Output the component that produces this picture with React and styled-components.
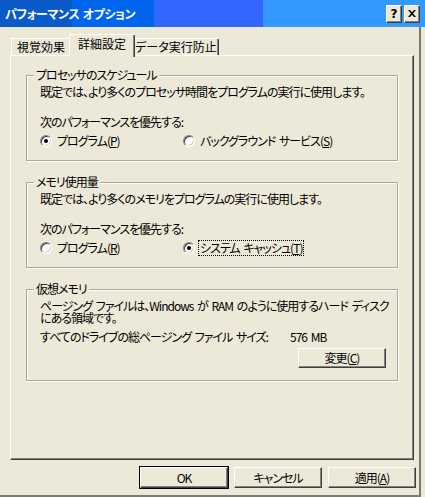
import React from 'react';
import styled, { createGlobalStyle } from 'styled-components';

const GlobalStyle = createGlobalStyle`
    html, body {
        margin: 0;
        padding: 0;
        background: #ece9d8;
    }
    body {
        font-family: "Noto Sans CJK JP", "Noto Sans", sans-serif;
        font-size: 12px;
        letter-spacing: -1px;
        word-spacing: 2px;
        color: #000;
    }
`;

const Window = styled.div`
    width: 425px;
    height: 497px;
    background: #ece9d8;
    display: flex;
    flex-direction: column;
    overflow: hidden;
`;

const TitleBar = styled.div`
    height: 27px;
    flex: none;
    display: flex;
    align-items: center;
    padding: 0 5px;
    background: linear-gradient(to right,
        #0a5ac8 0, #0a5ac8 72px,
        #0066ee 72px, #0066ee 154px,
        #3366ff 154px, #3366ff 263px,
        #3399ff 263px);
`;

const Title = styled.div`
    flex: 1;
    color: #fff;
    font-weight: bold;
    font-size: 12px;
    letter-spacing: -0.4px;
    word-spacing: 1px;
    font-feature-settings: "palt";
    white-space: nowrap;
`;

const CaptionButtons = styled.div`
    display: flex;
    gap: 2px;
`;

const CaptionButton = styled.div`
    width: 16px;
    height: 18px;
    box-sizing: border-box;
    background: #ece9d8;
    border-top: 1px solid #fff;
    border-left: 1px solid #fff;
    border-right: 1px solid #404040;
    border-bottom: 1px solid #404040;
    box-shadow: inset -1px -1px 0 #808080;
    display: flex;
    align-items: center;
    justify-content: center;
    font-family: "DejaVu Sans", sans-serif;
    font-weight: bold;
    font-size: 12px;
    letter-spacing: 0;
    line-height: 1;
`;

const Body = styled.div`
    width: 421px;
    height: 470px;
    box-sizing: border-box;
    border-right: 2px solid #7b7b76;
    border-bottom: 2px solid #7b7b76;
    padding: 7px 3px 0 10px;
    display: flex;
    flex-direction: column;
`;

const TabRow = styled.div`
    display: flex;
    align-items: flex-end;
    height: 21px;
    padding-left: 1px;
    position: relative;
    z-index: 1;
`;

const Tab = styled.div`
    width: ${p => (p.$active ? p.$w + 4 : p.$w)}px;
    height: ${p => (p.$active ? 23 : 17)}px;
    margin: 0 ${p => (p.$active ? -2 : 0)}px ${p => (p.$active ? -2 : 0)}px;
    box-sizing: border-box;
    background: #ece9d8;
    border-top: 1px solid #fff;
    border-left: 1px solid #fff;
    border-right: 1px solid #404040;
    border-radius: 2px 2px 0 0;
    box-shadow: inset -1px 0 0 #808080;
    display: flex;
    justify-content: center;
    padding-top: ${p => (p.$active ? 2 : 1)}px;
    line-height: 14px;
    letter-spacing: 0;
    white-space: nowrap;
    font-feature-settings: "palt";
    z-index: ${p => (p.$active ? 2 : 1)};
`;

const Panel = styled.div`
    width: 404px;
    height: 405px;
    box-sizing: border-box;
    border-top: 1px solid #fff;
    border-left: 1px solid #fff;
    border-right: 1px solid #404040;
    border-bottom: 1px solid #404040;
    box-shadow: inset -1px -1px 0 #808080;
    padding: 19px 15px 0 15px;
    display: flex;
    flex-direction: column;
    gap: 21px;
`;

const Group = styled.div`
    position: relative;
    border: 1px solid #aca899;
    box-shadow: inset 1px 1px 0 #fff, 1px 1px 0 #fff;
    padding: 9px 0 12px 13px;
`;

const Legend = styled.span`
    position: absolute;
    left: 7px;
    top: -8px;
    padding: 0 2px;
    background: #ece9d8;
    line-height: 14px;
    white-space: nowrap;
    font-feature-settings: "palt";
`;

const Line = styled.div`
    line-height: 14px;
    height: 14px;
    margin-top: ${p => p.$mt || 0}px;
    white-space: nowrap;
    font-feature-settings: "palt";
`;

const Paragraph = styled.div`
    width: 350px;
    line-height: 12px;
    margin-top: 1px;
    font-feature-settings: "palt";
`;

const RadioRow = styled.div`
    display: flex;
    margin-top: 5px;
    height: 14px;
`;

const RadioItem = styled.label`
    display: flex;
    align-items: center;
    width: ${p => (p.$w ? `${p.$w}px` : 'auto')};
    line-height: 14px;
    white-space: nowrap;
    font-feature-settings: "palt";
`;

const RadioDot = styled.span`
    width: 12px;
    height: 12px;
    box-sizing: border-box;
    flex: none;
    border-radius: 50%;
    border: 1px solid;
    border-color: #808080 #fff #fff #808080;
    box-shadow: inset 1px 1px 0 #404040, inset -1px -1px 0 #d4d0c8;
    background: #fff;
    margin-right: 4px;
    display: flex;
    align-items: center;
    justify-content: center;

    &::after {
        content: '';
        width: 4px;
        height: 4px;
        border-radius: 50%;
        background: ${p => (p.$on ? '#000' : 'transparent')};
    }
`;

const RadioText = styled.span`
    padding: 0 1px;
    outline: ${p => (p.$focus ? '1px dotted #000' : 'none')};
`;

const SizeRow = styled.div`
    display: flex;
    margin-top: 6px;
    line-height: 13px;
    height: 13px;
    white-space: nowrap;
    font-feature-settings: "palt";
`;

const SizeLabel = styled.span`
    flex: none;
    width: 250px;
`;

const Button = styled.button`
    width: 88px;
    height: ${p => p.$h || 21}px;
    box-sizing: border-box;
    padding: 0;
    background: #ece9d8;
    font-family: "Noto Sans CJK JP", "Noto Sans", sans-serif;
    font-size: 12px;
    letter-spacing: -1px;
    color: #000;
    font-feature-settings: "palt";
    border-top: 1px solid #fff;
    border-left: 1px solid #fff;
    border-right: 1px solid #404040;
    border-bottom: 1px solid #404040;
    box-shadow: inset -1px -1px 0 #808080;
    outline: ${p => (p.$default ? '1px solid #000' : 'none')};
    outline-offset: 0;
    line-height: 14px;
`;

const ChangeRow = styled.div`
    display: flex;
    justify-content: flex-end;
    padding-right: 11px;
    margin-top: 5px;
`;

const ButtonRow = styled.div`
    display: flex;
    justify-content: flex-end;
    gap: 6px;
    margin-top: 7px;
`;

const App = () => {
    return (
        <Window>
            <GlobalStyle />
            <TitleBar>
                <Title>パフォーマンス オプション</Title>
                <CaptionButtons>
                    <CaptionButton>?</CaptionButton>
                    <CaptionButton>
                        <svg width="8" height="7" viewBox="0 0 8 7">
                            <path d="M0 0h2l2 2.2L6 0h2L5 3.5 8 7H6L4 4.8 2 7H0l3-3.5z" fill="#000" />
                        </svg>
                    </CaptionButton>
                </CaptionButtons>
            </TitleBar>
            <Body>
                <TabRow>
                    <Tab $w={60}>視覚効果</Tab>
                    <Tab $w={62} $active>詳細設定</Tab>
                    <Tab $w={86}>データ実行防止</Tab>
                </TabRow>
                <Panel>
                    <Group>
                        <Legend>プロセッサのスケジュール</Legend>
                        <Line>既定では、より多くのプロセッサ時間をプログラムの実行に使用します。</Line>
                        <Line $mt={16}>次のパフォーマンスを優先する:</Line>
                        <RadioRow>
                            <RadioItem $w={143}>
                                <RadioDot $on />
                                <RadioText>プログラム(<u>P</u>)</RadioText>
                            </RadioItem>
                            <RadioItem>
                                <RadioDot />
                                <RadioText>バックグラウンド サービス(<u>S</u>)</RadioText>
                            </RadioItem>
                        </RadioRow>
                    </Group>
                    <Group>
                        <Legend>メモリ使用量</Legend>
                        <Line>既定では、より多くのメモリをプログラムの実行に使用します。</Line>
                        <Line $mt={16}>次のパフォーマンスを優先する:</Line>
                        <RadioRow>
                            <RadioItem $w={143}>
                                <RadioDot />
                                <RadioText>プログラム(<u>R</u>)</RadioText>
                            </RadioItem>
                            <RadioItem>
                                <RadioDot $on />
                                <RadioText $focus>システム キャッシュ(<u>T</u>)</RadioText>
                            </RadioItem>
                        </RadioRow>
                    </Group>
                    <Group>
                        <Legend>仮想メモリ</Legend>
                        <Paragraph>ページング ファイルは、Windows が RAM のように使用するハード ディスクにある領域です。</Paragraph>
                        <SizeRow>
                            <SizeLabel>すべてのドライブの総ページング ファイル サイズ:</SizeLabel>
                            <span>576 MB</span>
                        </SizeRow>
                        <ChangeRow>
                            <Button $h={20}>変更(<u>C</u>)</Button>
                        </ChangeRow>
                    </Group>
                </Panel>
                <ButtonRow>
                    <Button $default>OK</Button>
                    <Button>キャンセル</Button>
                    <Button>適用(<u>A</u>)</Button>
                </ButtonRow>
            </Body>
        </Window>
    );
};

export default App;
